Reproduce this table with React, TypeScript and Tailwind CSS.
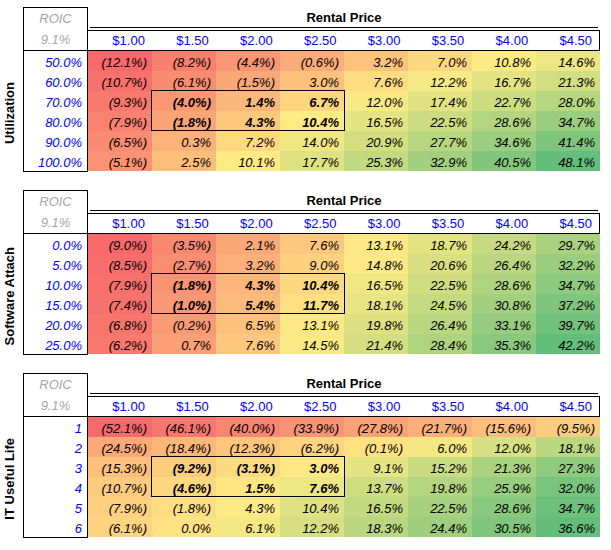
const prices = ['$1.00', '$1.50', '$2.00', '$2.50', '$3.00', '$3.50', '$4.00', '$4.50'];

type Sensitivity = {
  label: string;
  rows: string[];
  values: number[][];
};

const tables: Sensitivity[] = [
  {
    label: 'Utilization',
    rows: ['50.0%', '60.0%', '70.0%', '80.0%', '90.0%', '100.0%'],
    values: [
      [-12.1, -8.2, -4.4, -0.6, 3.2, 7.0, 10.8, 14.6],
      [-10.7, -6.1, -1.5, 3.0, 7.6, 12.2, 16.7, 21.3],
      [-9.3, -4.0, 1.4, 6.7, 12.0, 17.4, 22.7, 28.0],
      [-7.9, -1.8, 4.3, 10.4, 16.5, 22.5, 28.6, 34.7],
      [-6.5, 0.3, 7.2, 14.0, 20.9, 27.7, 34.6, 41.4],
      [-5.1, 2.5, 10.1, 17.7, 25.3, 32.9, 40.5, 48.1],
    ],
  },
  {
    label: 'Software Attach',
    rows: ['0.0%', '5.0%', '10.0%', '15.0%', '20.0%', '25.0%'],
    values: [
      [-9.0, -3.5, 2.1, 7.6, 13.1, 18.7, 24.2, 29.7],
      [-8.5, -2.7, 3.2, 9.0, 14.8, 20.6, 26.4, 32.2],
      [-7.9, -1.8, 4.3, 10.4, 16.5, 22.5, 28.6, 34.7],
      [-7.4, -1.0, 5.4, 11.7, 18.1, 24.5, 30.8, 37.2],
      [-6.8, -0.2, 6.5, 13.1, 19.8, 26.4, 33.1, 39.7],
      [-6.2, 0.7, 7.6, 14.5, 21.4, 28.4, 35.3, 42.2],
    ],
  },
  {
    label: 'IT Useful Life',
    rows: ['1', '2', '3', '4', '5', '6'],
    values: [
      [-52.1, -46.1, -40.0, -33.9, -27.8, -21.7, -15.6, -9.5],
      [-24.5, -18.4, -12.3, -6.2, -0.1, 6.0, 12.0, 18.1],
      [-15.3, -9.2, -3.1, 3.0, 9.1, 15.2, 21.3, 27.3],
      [-10.7, -4.6, 1.5, 7.6, 13.7, 19.8, 25.9, 32.0],
      [-7.9, -1.8, 4.3, 10.4, 16.5, 22.5, 28.6, 34.7],
      [-6.1, 0.0, 6.1, 12.2, 18.3, 24.4, 30.5, 36.6],
    ],
  },
];

// excel style 3-colour scale: min red, median yellow, max green
const RED = [248, 105, 107];
const YELLOW = [255, 235, 132];
const GREEN = [99, 190, 123];

function colorScale(values: number[][]) {
  const flat = values.flat().sort((a, b) => a - b);
  const min = flat[0];
  const max = flat[flat.length - 1];
  const pos = (flat.length - 1) / 2;
  const mid = (flat[Math.floor(pos)] + flat[Math.ceil(pos)]) / 2;
  return (v: number) => {
    const [from, to, t] =
      v <= mid ? [RED, YELLOW, (v - min) / (mid - min)] : [YELLOW, GREEN, (v - mid) / (max - mid)];
    const c = from.map((x, i) => Math.round(x + (to[i] - x) * t));
    return `rgb(${c.join(',')})`;
  };
}

function fmt(v: number) {
  return v < 0 ? `(${Math.abs(v).toFixed(1)}%)` : `${v.toFixed(1)}%`;
}

function isBase(r: number, c: number) {
  return (r === 2 || r === 3) && c >= 1 && c <= 3;
}

function SensitivityTable({ table }: { table: Sensitivity }) {
  const color = colorScale(table.values);
  return (
    <div className="flex flex-col">
      <div className="flex h-[43px]">
        <div className="w-[23px]" />
        <div className="flex w-[65px] flex-col border-l border-r border-t border-black italic text-[#a6a6a6]">
          <div className="flex h-[21px] items-center justify-center">ROIC</div>
          <div className="flex h-[21px] items-center justify-center">9.1%</div>
        </div>
        <div className="flex w-[512px] flex-col">
          <div className="mx-[2px] flex h-[21px] items-center justify-center border-b border-black font-bold text-black">
            Rental Price
          </div>
          <div className="mt-[2px] flex h-[20px] border-r border-t border-black">
            {prices.map((p) => (
              <div key={p} className="flex w-[64px] items-center justify-end pr-[7px] text-[#0000ff]">
                {p}
              </div>
            ))}
          </div>
        </div>
      </div>
      <div className="flex">
        <div className="flex w-[23px] items-center justify-center pr-[4px] pt-[4px]">
          <span className="rotate-180 whitespace-nowrap font-bold text-black [writing-mode:vertical-rl]">
            {table.label}
          </span>
        </div>
        <div className="flex border-t border-black">
          <div className="w-[65px] border-b border-l border-r border-black">
            {table.rows.map((r) => (
              <div key={r} className="flex h-[20px] items-center justify-end pr-[5px] pt-[2px] italic text-[#0000ff]">
                {r}
              </div>
            ))}
          </div>
          <div className="relative">
            {table.values.map((row, ri) => (
              <div key={ri} className="flex">
                {row.map((v, ci) => (
                  <div
                    key={ci}
                    className={`flex h-[20px] w-[64px] items-center justify-end pr-[5px] pt-[2px] italic text-black ${
                      isBase(ri, ci) ? 'font-bold' : ''
                    }`}
                    style={{ backgroundColor: color(v) }}
                  >
                    {fmt(v)}
                  </div>
                ))}
              </div>
            ))}
            <div className="pointer-events-none absolute left-[63px] top-[39px] h-[41px] w-[194px] border border-black" />
          </div>
        </div>
      </div>
    </div>
  );
}

export default function App() {
  return (
    <div className="flex h-[550px] w-[611px] flex-col gap-[18px] bg-white pt-[7px] font-['Liberation_Sans',Arial,sans-serif] text-[13px] leading-none">
      {tables.map((t) => (
        <SensitivityTable key={t.label} table={t} />
      ))}
    </div>
  );
}
